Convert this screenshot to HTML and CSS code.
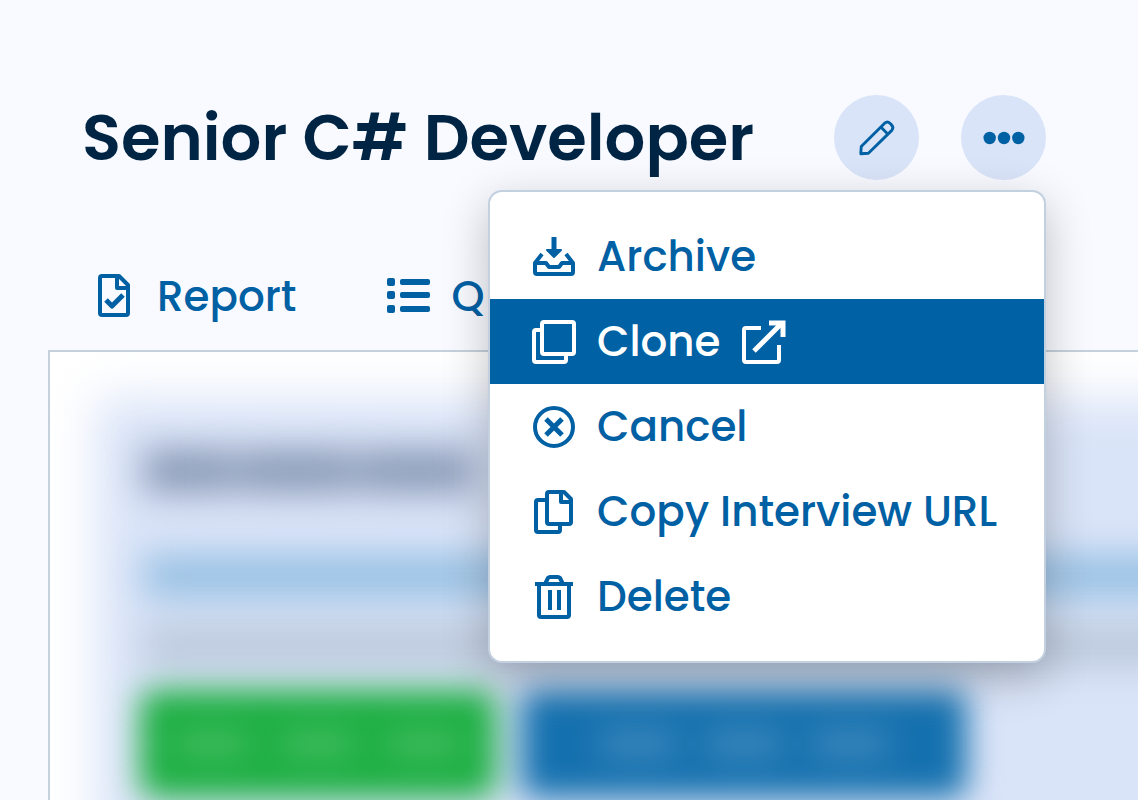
FILE: index.html
```
<!DOCTYPE html>
<html lang="en">
<head>
  <meta charset="utf-8">
  <meta name="viewport" content="width=device-width, initial-scale=1">
  <title>Senior C# Developer</title>
  <link rel="stylesheet" href="styles.css">
</head>
<body>
  <header class="header">
    <h1>Senior C# Developer</h1>
    <div class="actions">
      <button class="round-button" title="Edit" aria-label="Edit">
        <svg viewBox="0 0 44 44" fill="none" stroke="currentColor" stroke-width="3" stroke-linejoin="round">
          <path d="M5 38.500L5.500 31L30 6.500Q33 4 35.500 6.500L37 8Q40 11 37.500 14L13 38Z"/>
          <path d="M26 10.500L33.500 18"/>
        </svg>
      </button>
      <div class="dropdown">
        <button class="round-button" title="More" aria-label="More" aria-expanded="true">
          <svg viewBox="0 0 44 44" fill="currentColor">
            <circle cx="7" cy="22" r="6.500"/>
            <circle cx="22" cy="22" r="6.500"/>
            <circle cx="37" cy="22" r="6.500"/>
          </svg>
        </button>
        <div class="menu">
          <button class="menu-item">
            <svg viewBox="0 0 44 44" fill="none" stroke="currentColor" stroke-width="4" stroke-linejoin="round">
              <path d="M10 19L3 28V37Q3 39 5 39H39Q41 39 41 37V28L34 19"/>
              <path d="M3 28H14L17 32H27L30 28H41"/>
              <path d="M22 2V16" stroke-width="5"/>
              <path d="M15 15H29L22 22Z" fill="currentColor" stroke-width="2"/>
            </svg>
            Archive
          </button>
          <button class="menu-item active">
            <svg viewBox="0 0 44 44" fill="none" stroke="currentColor" stroke-width="4" stroke-linejoin="round">
              <rect x="10" y="2" width="32" height="32" rx="2"/>
              <path d="M10 10H4Q2 10 2 12V40Q2 42 4 42H32Q34 42 34 40V34"/>
            </svg>
            Clone
            <svg viewBox="0 0 44 44" fill="none" stroke="currentColor" stroke-width="4">
              <path d="M19 8H4Q2 8 2 10V40Q2 42 4 42H35Q37 42 37 40V25" stroke-linejoin="round"/>
              <path d="M12 31L39 4" stroke-width="5"/>
              <path d="M27 3H41V17" stroke-width="5"/>
            </svg>
          </button>
          <button class="menu-item">
            <svg viewBox="0 0 44 44" fill="none" stroke="currentColor" stroke-width="4">
              <circle cx="22" cy="22" r="19"/>
              <path d="M14 14L30 30M30 14L14 30" stroke-width="5"/>
            </svg>
            Cancel
          </button>
          <button class="menu-item">
            <svg viewBox="0 0 44 44" fill="none" stroke="currentColor" stroke-width="4" stroke-linejoin="round">
              <path d="M17 2H32L39 9V32Q39 34 37 34H17Q15 34 15 32V4Q15 2 17 2Z"/>
              <path d="M29 2V12H39"/>
              <path d="M15 10H6Q4 10 4 12V40Q4 42 6 42H26Q28 42 28 40V34"/>
            </svg>
            Copy Interview URL
          </button>
          <button class="menu-item">
            <svg viewBox="0 0 44 44" fill="none" stroke="currentColor" stroke-width="4" stroke-linejoin="round">
              <path d="M3 9H41M13 9L16 3Q17 2 18 2H26Q27 2 28 3L31 9"/>
              <path d="M7 9V40Q7 42 9 42H35Q37 42 37 40V9M18 15V35M27 15V35"/>
            </svg>
            Delete
          </button>
        </div>
      </div>
    </div>
  </header>

  <nav class="tabs">
    <a href="#report" class="tab">
      <svg viewBox="0 0 44 44" fill="none" stroke="currentColor" stroke-width="4" stroke-linejoin="round">
        <path d="M10 2H27L36 11V39Q36 41 34 41H10Q8 41 8 39V4Q8 2 10 2Z"/>
        <path d="M25 3V14H36"/>
        <path d="M14 26L20 32L31 21" stroke-width="5"/>
      </svg>
      Report
    </a>
    <a href="#questions" class="tab">
      <svg viewBox="0 0 44 44" fill="currentColor">
        <rect x="1" y="4" width="8" height="8" rx="2"/>
        <rect x="1" y="17" width="8" height="8" rx="2"/>
        <rect x="1" y="31" width="8" height="8" rx="2"/>
        <rect x="14" y="5" width="30" height="6" rx="2"/>
        <rect x="14" y="18" width="30" height="6" rx="2"/>
        <rect x="14" y="32" width="30" height="6" rx="2"/>
      </svg>
      Q
    </a>
  </nav>

  <main class="panel">
    <div class="card" aria-hidden="true">
      <div class="blurred">
        <div class="words">
          <span class="word"></span>
          <span class="word wide"></span>
          <span class="word wide"></span>
        </div>
        <div class="line link"></div>
        <div class="line"></div>
      </div>
      <div class="pills">
        <div class="pill green"><span></span><span></span><span></span></div>
        <div class="pill blue"><span></span><span></span><span></span></div>
      </div>
    </div>
  </main>
</body>
</html>
```
FILE: styles.css
```
* {
  box-sizing: border-box;
}
body {
  margin: 0;
  min-height: 100vh;
  display: flex;
  flex-direction: column;
  background: #f8faff;
  color: #0060a4;
  font-family: Poppins, Inter, sans-serif;
}
svg {
  width: 44px;
  height: 44px;
  flex-shrink: 0;
}
.header {
  display: flex;
  align-items: center;
  justify-content: space-between;
  padding: 95px 92px 0 82px;
}
h1 {
  margin: 0;
  color: #002443;
  font-size: 64px;
  font-weight: 600;
  line-height: 84px;
  white-space: nowrap;
}
.actions {
  display: flex;
  gap: 42px;
}
.round-button {
  display: flex;
  align-items: center;
  justify-content: center;
  width: 85px;
  height: 85px;
  padding: 0;
  border: none;
  border-radius: 50%;
  background: #dae4f8;
  color: #0060a4;
  cursor: pointer;
}
.round-button:hover {
  background: #cbd9f4;
}
.round-button svg {
  width: 42px;
  height: 42px;
}
.dropdown {
  position: relative;
}
.menu {
  position: absolute;
  top: 95px;
  right: 0;
  z-index: 10;
  min-width: 558px;
  padding: 22px 0;
  border: 2px solid #c2d0df;
  border-radius: 14px;
  background: white;
  box-shadow: 0 14px 46px rgba(0, 0, 0, 0.24);
}
.menu-item {
  display: flex;
  align-items: center;
  gap: 21px;
  width: 100%;
  height: 85px;
  padding: 0 42px;
  border: none;
  background: none;
  color: #0060a4;
  font-family: inherit;
  font-size: 42px;
  font-weight: 500;
  white-space: nowrap;
  cursor: pointer;
}
.menu-item.active,
.menu-item:hover {
  background: #0062a5;
  color: white;
}
.tabs {
  display: flex;
  gap: 90px;
  height: 170px;
  padding: 63px 0 0 92px;
}
.tab {
  display: flex;
  align-items: center;
  gap: 21px;
  height: 106px;
  color: #0060a4;
  font-size: 42px;
  font-weight: 500;
  text-decoration: none;
}
.tab:hover {
  text-decoration: underline;
}
.panel {
  flex: 1;
  display: flex;
  margin-left: 48px;
  border: 2px solid #c5d1dc;
  border-width: 2px 0 0 2px;
  background: white;
  overflow: hidden;
}
.card {
  position: relative;
  flex: 1;
  padding: 98px 0 4px 94px;
}
/* soft card background, runs off the right and bottom edges */
.card::before {
  content: "";
  position: absolute;
  inset: 46px -60px -60px 46px;
  background: #dae4f8;
  filter: blur(24px);
}
.blurred {
  filter: blur(18px);
}
.words {
  display: flex;
  gap: 4px;
}
.word {
  width: 90px;
  height: 42px;
  background: #8696b3;
}
.word.wide {
  width: 116px;
}
.line {
  height: 40px;
  margin-top: 30px;
  margin-right: -60px;
  background: #b9c7da;
}
.line.link {
  margin-top: 64px;
  background: #93bee2;
}
.pills {
  position: relative;
  display: flex;
  gap: 25px;
  margin-top: 24px;
  margin-left: -4px;
  filter: blur(16px);
}
.pill {
  display: flex;
  align-items: center;
  justify-content: center;
  gap: 30px;
  width: 356px;
  height: 108px;
  border-radius: 14px;
}
.pill span {
  width: 76px;
  height: 24px;
  background: rgba(255, 255, 255, 0.2);
}
.pill.green {
  background: #1aae40;
}
.pill.blue {
  width: 446px;
  background: #1470ae;
}
```
